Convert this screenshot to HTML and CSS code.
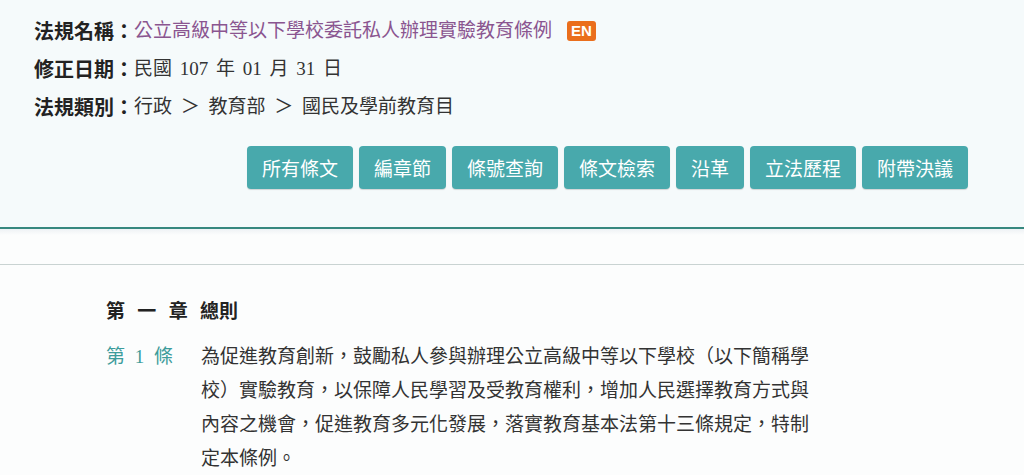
FILE: index.html
```html
<!DOCTYPE html>
<html lang="zh-Hant">
<head>
<meta charset="utf-8">
<title>公立高級中等以下學校委託私人辦理實驗教育條例</title>
<link rel="stylesheet" href="styles.css">
</head>
<body>
<header class="law-head">
  <div class="info">
    <div class="row"><span class="label">法規名稱：</span><a class="law-name" href="#">公立高級中等以下學校委託私人辦理實驗教育條例</a><span class="en">EN</span></div>
    <div class="row"><span class="label">修正日期：</span><span class="val">民國 107 年 01 月 31 日</span></div>
    <div class="row"><span class="label">法規類別：</span><span class="val cat">行政 ＞ 教育部 ＞ 國民及學前教育目</span></div>
  </div>
  <nav class="tabs">
    <a class="btn" href="#">所有條文</a>
    <a class="btn" href="#">編章節</a>
    <a class="btn" href="#">條號查詢</a>
    <a class="btn" href="#">條文檢索</a>
    <a class="btn" href="#">沿革</a>
    <a class="btn" href="#">立法歷程</a>
    <a class="btn" href="#">附帶決議</a>
  </nav>
</header>
<div class="band"></div>
<main class="content">
  <h2 class="chapter">第 一 章 總則</h2>
  <div class="article">
    <div class="art-no">第 1 條</div>
    <div class="art-body">為促進教育創新，鼓勵私人參與辦理公立高級中等以下學校（以下簡稱學校）實驗教育，以保障人民學習及受教育權利，增加人民選擇教育方式與內容之機會，促進教育多元化發展，落實教育基本法第十三條規定，特制定本條例。</div>
  </div>
</main>
</body>
</html>
```
FILE: styles.css
```css
html, body {
  margin: 0;
  padding: 0;
}
body {
  background: #fcfdfd;
  font-family: "Liberation Serif", "Noto Sans CJK TC", serif;
  font-size: 19px;
  color: #333;
}
.law-head {
  background: #f5fafb;
  border-bottom: 2px solid #36887f;
  padding: 12px 56px 0 34px;
  box-sizing: border-box;
  height: 229px;
}
.info {
  display: flex;
  flex-direction: column;
}
.row {
  display: flex;
  align-items: center;
  height: 38px;
  line-height: 38px;
  white-space: nowrap;
}
.label {
  font-family: "Noto Sans CJK TC", sans-serif;
  font-size: 20px;
  font-weight: bold;
  color: #222;
}
.law-name {
  color: #8a5590;
  text-decoration: none;
}
.val {
  color: #333;
  word-spacing: 3px;
}
.val.cat {
  word-spacing: 4px;
}
.en {
  margin-left: 15px;
  background: #ea6e1c;
  color: #fff;
  font-family: "Liberation Sans", sans-serif;
  font-weight: bold;
  font-size: 15px;
  line-height: 20px;
  height: 20px;
  padding: 0 4px;
  border-radius: 3px;
}
.tabs {
  display: flex;
  justify-content: flex-end;
  gap: 6px;
  margin-top: 20px;
}
.btn {
  display: block;
  background: #48a9ac;
  color: #fff;
  text-decoration: none;
  font-family: "Noto Sans CJK TC", sans-serif;
  font-size: 19px;
  height: 43px;
  line-height: 43px;
  padding: 0 15px;
  border-radius: 4px;
  box-shadow: 0 1px 1px rgba(0,0,0,0.15);
}
.band {
  height: 35px;
  background: linear-gradient(#eef2f5, #fcfdfd 6px);
  border-bottom: 1px solid #c9d3d2;
}
.content {
  padding: 28px 0 0 106px;
}
.chapter {
  margin: 0;
  font-family: "Noto Sans CJK TC", sans-serif;
  font-size: 19px;
  font-weight: bold;
  color: #222;
  line-height: 34px;
  word-spacing: 8px;
}
.article {
  display: flex;
  margin-top: 13px;
  line-height: 34px;
}
.art-no {
  width: 95px;
  flex: none;
  color: #3c9c9b;
  word-spacing: 5px;
}
.art-body {
  width: 612px;
  color: #333;
}
```
